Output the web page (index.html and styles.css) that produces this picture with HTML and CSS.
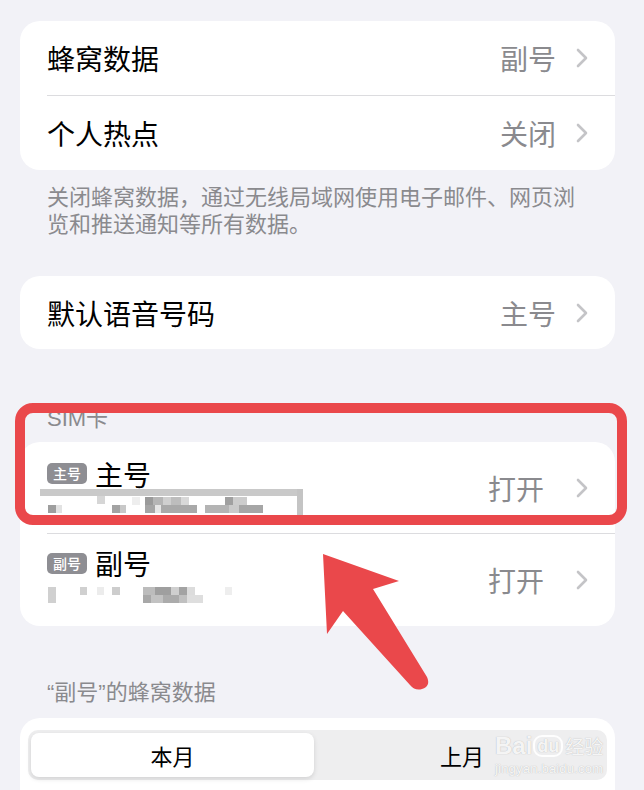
FILE: index.html
```html
<!DOCTYPE html>
<html lang="zh-CN">
<head>
<meta charset="utf-8">
<title>蜂窝网络</title>
<link rel="stylesheet" href="styles.css">
</head>
<body>
<div class="page">
  <div class="card">
    <div class="row"><div class="row-in"><span class="label">蜂窝数据</span><span class="value">副号</span><svg class="chev" viewBox="0 0 12 20"><path d="M2 2 L10 10 L2 18"/></svg></div></div>
    <div class="row"><div class="row-in sep"><span class="label">个人热点</span><span class="value">关闭</span><svg class="chev" viewBox="0 0 12 20"><path d="M2 2 L10 10 L2 18"/></svg></div></div>
  </div>
  <p class="note">关闭蜂窝数据，通过无线局域网使用电子邮件、网页浏览和推送通知等所有数据。</p>

  <div class="card card2">
    <div class="row"><div class="row-in"><span class="label">默认语音号码</span><span class="value">主号</span><svg class="chev" viewBox="0 0 12 20"><path d="M2 2 L10 10 L2 18"/></svg></div></div>
  </div>

  <div class="section-title sim-title">SIM卡</div>
  <div class="card">
    <div class="row sim"><div class="row-in">
      <div class="main">
        <div class="title-line"><span class="badge">主号</span><span class="label">主号</span></div>
        <svg class="blur blur1" width="270" height="28" viewBox="0 0 270 28">
          <rect x="0" y="0" width="263" height="7" fill="#c9c9c9"/>
          <rect x="257" y="0" width="6" height="27" fill="#c4c4c4"/>
          <rect x="57" y="-2" width="23" height="2" fill="#d2d2d2"/>
          <rect x="57" y="7" width="8" height="8" fill="#d6d6d6"/>
          <rect x="8" y="16" width="8" height="8" fill="#9e9e9e"/>
          <rect x="16" y="16" width="6" height="8" fill="#e2e2e2"/>
          <rect x="72" y="16" width="8" height="8" fill="#a3a3a3"/>
          <rect x="80" y="16" width="6" height="8" fill="#c8c8c8"/>
          <rect x="92" y="8" width="8" height="8" fill="#eeeeee"/>
          <rect x="105" y="8" width="8" height="8" fill="#9a9a9a"/>
          <rect x="113" y="8" width="10" height="8" fill="#b5b5b5"/>
          <rect x="123" y="8" width="8" height="8" fill="#cfcfcf"/>
          <rect x="131" y="8" width="10" height="8" fill="#bdbdbd"/>
          <rect x="141" y="8" width="8" height="8" fill="#d8d8d8"/>
          <rect x="105" y="16" width="10" height="8" fill="#a5a5a5"/>
          <rect x="115" y="16" width="6" height="8" fill="#e6e6e6"/>
          <rect x="121" y="16" width="36" height="8" fill="#a9a9a9"/>
          <rect x="165" y="16" width="24" height="8" fill="#b4b4b4"/>
          <rect x="189" y="16" width="10" height="8" fill="#cacaca"/>
          <rect x="185" y="8" width="8" height="8" fill="#a0a0a0"/>
          <rect x="193" y="8" width="14" height="8" fill="#cccccc"/>
          <rect x="199" y="16" width="24" height="8" fill="#a6a6a6"/>
        </svg>
      </div>
      <span class="value">打开</span><svg class="chev" viewBox="0 0 12 20"><path d="M2 2 L10 10 L2 18"/></svg>
    </div></div>
    <div class="row sim"><div class="row-in sep">
      <div class="main">
        <div class="title-line"><span class="badge">副号</span><span class="label">副号</span></div>
        <svg class="blur blur2" width="270" height="28" viewBox="0 0 270 28">
          <rect x="8" y="3" width="8" height="16" fill="#d0d0d0"/>
          <rect x="40" y="3" width="7" height="8" fill="#d0d0d0"/>
          <rect x="57" y="3" width="7" height="8" fill="#ececec"/>
          <rect x="72" y="3" width="8" height="8" fill="#cdcdcd"/>
          <rect x="103" y="3" width="12" height="8" fill="#bcbcbc"/>
          <rect x="115" y="3" width="16" height="8" fill="#9f9f9f"/>
          <rect x="131" y="3" width="8" height="8" fill="#cfcfcf"/>
          <rect x="139" y="3" width="8" height="8" fill="#a3a3a3"/>
          <rect x="147" y="3" width="8" height="8" fill="#dcdcdc"/>
          <rect x="103" y="11" width="8" height="8" fill="#a8a8a8"/>
          <rect x="111" y="11" width="12" height="8" fill="#c2c2c2"/>
          <rect x="123" y="11" width="16" height="8" fill="#ababab"/>
          <rect x="139" y="11" width="8" height="8" fill="#c0c0c0"/>
          <rect x="147" y="11" width="16" height="8" fill="#dedede"/>
          <rect x="185" y="3" width="7" height="8" fill="#eeeeee"/>
        </svg>
      </div>
      <span class="value">打开</span><svg class="chev" viewBox="0 0 12 20"><path d="M2 2 L10 10 L2 18"/></svg>
    </div></div>
  </div>

  <div class="section-title data-title">“副号”的蜂窝数据</div>
  <div class="card card4">
    <div class="seg">
      <div class="seg-item on">本月</div>
      <div class="seg-item">上月</div>
    </div>
  </div>
</div>

<div class="highlight"></div>
<svg class="arrow" width="644" height="790" viewBox="0 0 644 790">
  <path d="M323 554 L399 581 L373 589 L427 677 Q431 686 422 689 Q415 691 410 685 L343 611 L327 634 Z" fill="#ea484b"/>
</svg>
<div class="watermark"><div class="wm-top"><span class="wm-bai">Bai</span><span class="wm-du">du</span><span class="wm-jy">经验</span></div><div class="wm-url">jingyan.baidu.com</div></div>
</body>
</html>
```
FILE: styles.css
```css
html, body {
  margin: 0;
  padding: 0;
}
body {
  background: #f2f2f7;
  width: 644px;
  height: 790px;
  overflow: hidden;
  position: relative;
  font-family: "Noto Sans CJK SC", "Noto Sans", sans-serif;
  color: #000;
}
.page {
  padding: 21px 29px 0 20px;
}
.card {
  background: #fff;
  border-radius: 20px;
  overflow: hidden;
}
.row {
  padding-left: 27px;
}
.row-in {
  display: flex;
  align-items: center;
  height: 74px;
  padding-right: 27px;
}
.row-in.sep {
  border-top: 1px solid #dcdcdf;
}
.label {
  font-size: 28px;
  line-height: 30px;
  flex: 1;
}
.value {
  font-size: 28px;
  line-height: 30px;
  color: #8a8a8e;
  margin-right: 20px;
}
.chev {
  width: 12px;
  height: 20px;
  flex: none;
}
.chev path {
  fill: none;
  stroke: #c4c4c7;
  stroke-width: 2.6;
  stroke-linecap: round;
  stroke-linejoin: round;
}
.note {
  margin: 12px 0 0 0;
  padding: 0 20px 0 27px;
  font-size: 22px;
  line-height: 27px;
  color: #8a8a8e;
}
.card2 {
  margin-top: 40px;
}
.card2 .row-in {
  height: 73px;
}
.section-title {
  padding-left: 27px;
  font-family: "Liberation Sans", "Noto Sans CJK SC", sans-serif;
  font-size: 22px;
  line-height: 24px;
  color: #8a8a8e;
}
.sim-title {
  margin-top: 58px;
  margin-bottom: 11px;
}
.row.sim .row-in {
  height: 91px;
}
.row.sim + .row.sim .row-in {
  height: 92px;
}
.row.sim .value {
  margin-right: 32px;
}
.main {
  flex: 1;
  display: flex;
  flex-direction: column;
}
.title-line {
  display: flex;
  align-items: center;
  height: 30px;
}
.title-line .label {
  flex: none;
}
.badge {
  background: #8e8e93;
  color: #fff;
  font-size: 14px;
  line-height: 21px;
  height: 21px;
  padding: 0 6px;
  border-radius: 5px;
  margin-right: 8px;
  font-weight: 500;
}
.blur {
  display: block;
  margin-left: -7px;
}
.blur2 {
  margin-top: 6px;
}
.data-title {
  margin-top: 55px;
  margin-bottom: 13px;
}
.card4 {
  padding: 12px 8px 14px 8px;
  height: 60px;
  border-radius: 20px 20px 0 0;
}
.seg {
  display: flex;
  background: #eeeeef;
  border-radius: 10px;
  height: 50px;
  padding: 3px;
  box-sizing: border-box;
}
.seg-item {
  flex: 1;
  display: flex;
  align-items: center;
  justify-content: center;
  font-size: 22px;
  color: #000;
  padding-left: 6px;
}
.seg-item.on {
  flex: none;
  width: 283px;
  padding-left: 0;
  background: #fff;
  border-radius: 8px;
  box-shadow: 0 2px 5px rgba(0,0,0,0.12);
}
.highlight {
  position: absolute;
  left: 15px;
  top: 403px;
  width: 612px;
  height: 122px;
  box-sizing: border-box;
  border: 10px solid #ea484b;
  border-radius: 18px;
}
.arrow {
  position: absolute;
  left: 0;
  top: 0;
}
.watermark {
  position: absolute;
  left: 495px;
  top: 734px;
  width: 149px;
  font-family: "Liberation Sans", sans-serif;
  color: rgba(255,255,255,0.9);
  text-shadow: 0 0 1px rgba(140,140,140,0.7);
}
.wm-top {
  display: flex;
  align-items: center;
  font-size: 24px;
  font-weight: bold;
  line-height: 24px;
}
.wm-du {
  font-size: 18px;
  border: 2px solid rgba(255,255,255,0.9);
  border-radius: 9px;
  padding: 0 2px;
  line-height: 18px;
  margin: 0 2px 0 1px;
}
.wm-jy {
  font-family: "Noto Sans CJK SC", sans-serif;
  font-size: 19px;
  font-weight: normal;
}
.wm-url {
  font-size: 13px;
  line-height: 14px;
  margin-top: 4px;
  letter-spacing: 0.2px;
}
```
